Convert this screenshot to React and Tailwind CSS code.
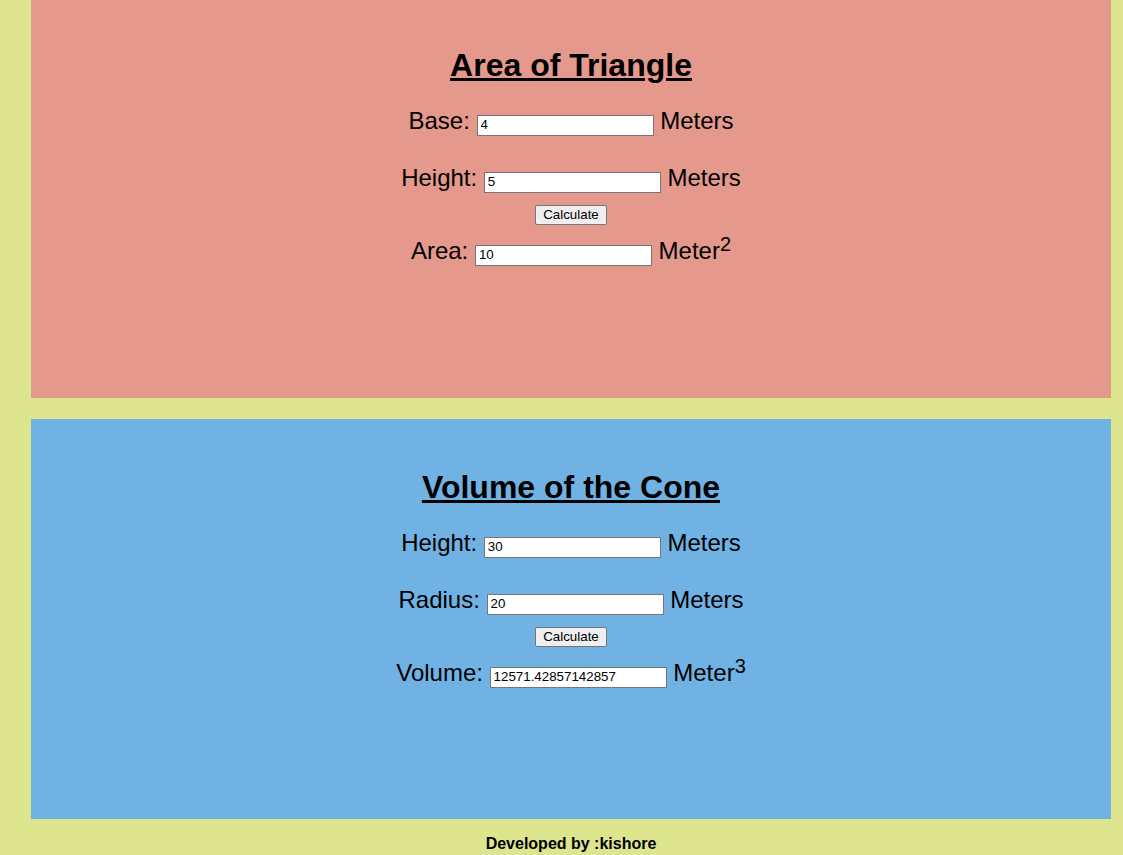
import { useState } from "react";

const font = { fontFamily: '"Liberation Sans", Arial, sans-serif' };

function Row({ label, value, unit, sup }) {
  return (
    <div className="h-[28px] text-center text-[24px] leading-[28px] text-black whitespace-nowrap">
      {label}{" "}
      <input
        type="text"
        value={value}
        readOnly
        className="w-[177px] h-[21px] border border-[#767676] bg-white px-[3px] text-[13.33px] text-black align-baseline outline-none"
      />{" "}
      {unit}
      {sup && <sup className="text-[20px] leading-none relative top-[-8px] align-baseline">{sup}</sup>}
    </div>
  );
}

function CalcButton({ onClick }) {
  return (
    <div className="flex justify-center">
      <button
        onClick={onClick}
        className="h-[20px] px-[7px] border border-[#767676] rounded-[2px] bg-[#efefef] text-[13.33px] leading-none text-black"
      >
        Calculate
      </button>
    </div>
  );
}

export default function App() {
  const [base] = useState("4");
  const [height] = useState("5");
  const [area, setArea] = useState("10");
  const [coneH] = useState("30");
  const [radius] = useState("20");
  const [volume, setVolume] = useState("12571.42857142857");

  return (
    <div className="min-h-[855px] bg-[#dee58f] px-[31px] pr-[12px] overflow-hidden" style={font}>
      {/* triangle */}
      <div className="h-[398px] bg-[#e5998d] pt-[47px]">
        <h1 className="text-center text-[32px] font-bold underline leading-[37px] text-black">
          Area of Triangle
        </h1>
        <div className="mt-[23px]">
          <Row label="Base:" value={base} unit="Meters" />
        </div>
        <div className="mt-[29px]">
          <Row label="Height:" value={height} unit="Meters" />
        </div>
        <div className="mt-[13px]">
          <CalcButton onClick={() => setArea(String((base * height) / 2))} />
        </div>
        <div className="mt-[12px]">
          <Row label="Area:" value={area} unit="Meter" sup="2" />
        </div>
      </div>

      {/* cone */}
      <div className="mt-[21px] h-[400px] bg-[#70b2e4] pt-[50px]">
        <h1 className="text-center text-[32px] font-bold underline leading-[37px] text-black">
          Volume of the Cone
        </h1>
        <div className="mt-[23px]">
          <Row label="Height:" value={coneH} unit="Meters" />
        </div>
        <div className="mt-[29px]">
          <Row label="Radius:" value={radius} unit="Meters" />
        </div>
        <div className="mt-[13px]">
          <CalcButton onClick={() => setVolume(String((22 / 7) * radius * radius * coneH / 3))} />
        </div>
        <div className="mt-[12px]">
          <Row label="Volume:" value={volume} unit="Meter" sup="3" />
        </div>
      </div>

      <p className="mt-[16px] text-center text-[16px] font-bold leading-[18px] text-black">
        Developed by :kishore
      </p>
    </div>
  );
}
